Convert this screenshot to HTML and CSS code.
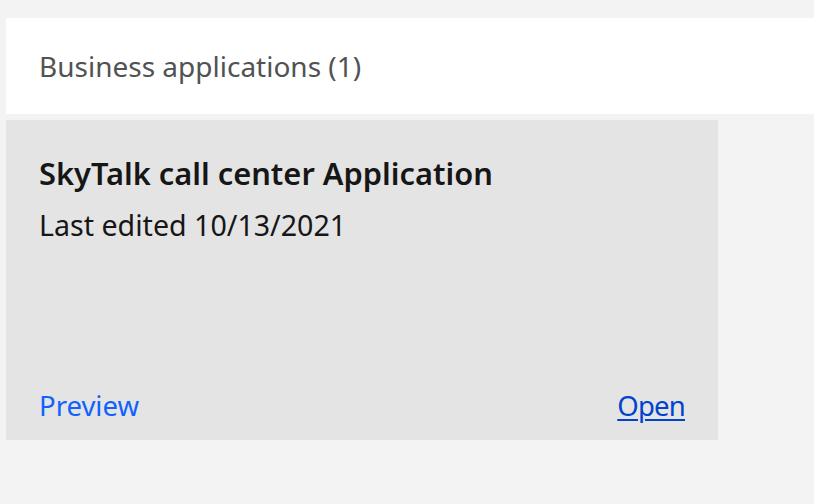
FILE: index.html
```html
<!DOCTYPE html>
<html lang="en">
<head>
<meta charset="utf-8">
<title>Business applications</title>
<link rel="stylesheet" href="styles.css">
</head>
<body>
<main class="page">
  <header class="section-header">
    <h2 class="section-title">Business applications (1)</h2>
  </header>
  <div class="grid">
    <article class="app-card">
      <div class="card-body">
        <h3 class="card-title">SkyTalk call center Application</h3>
        <p class="card-meta">Last edited 10/13/2021</p>
      </div>
      <div class="card-actions">
        <a class="link-preview" href="#">Preview</a>
        <a class="link-open" href="#">Open</a>
      </div>
    </article>
  </div>
</main>
</body>
</html>
```

FILE: styles.css
```css
html, body {
  margin: 0;
  padding: 0;
  background: #f3f3f3;
  font-family: "Noto Sans", "Open Sans", sans-serif;
}
.page {
  padding: 18px 0 0 6px;
  display: flex;
  flex-direction: column;
  gap: 6px;
}
.section-header {
  background: #ffffff;
  height: 96px;
  display: flex;
  align-items: center;
  padding-left: 33px;
}
.section-title {
  margin: 0;
  font-size: 28px;
  line-height: 36px;
  font-weight: 400;
  color: #525252;
}
.grid {
  display: flex;
}
.app-card {
  width: 712px;
  height: 320px;
  box-sizing: border-box;
  background: #e4e4e4;
  padding: 33px 33px 16px 33px;
  display: flex;
  flex-direction: column;
  justify-content: space-between;
}
.card-title {
  margin: 0;
  font-size: 30.8px;
  line-height: 40px;
  font-weight: 600;
  color: #161616;
}
.card-meta {
  margin: 14px 0 0;
  font-size: 28.6px;
  line-height: 36px;
  color: #161616;
}
.card-actions {
  display: flex;
  justify-content: space-between;
  font-size: 27.5px;
  line-height: 36px;
}
.link-preview {
  color: #0f62fe;
  text-decoration: none;
}
.link-open {
  color: #0043ce;
  text-decoration: underline;
  text-decoration-thickness: 2px;
  text-underline-offset: 3px;
  letter-spacing: -0.8px;
}
```
